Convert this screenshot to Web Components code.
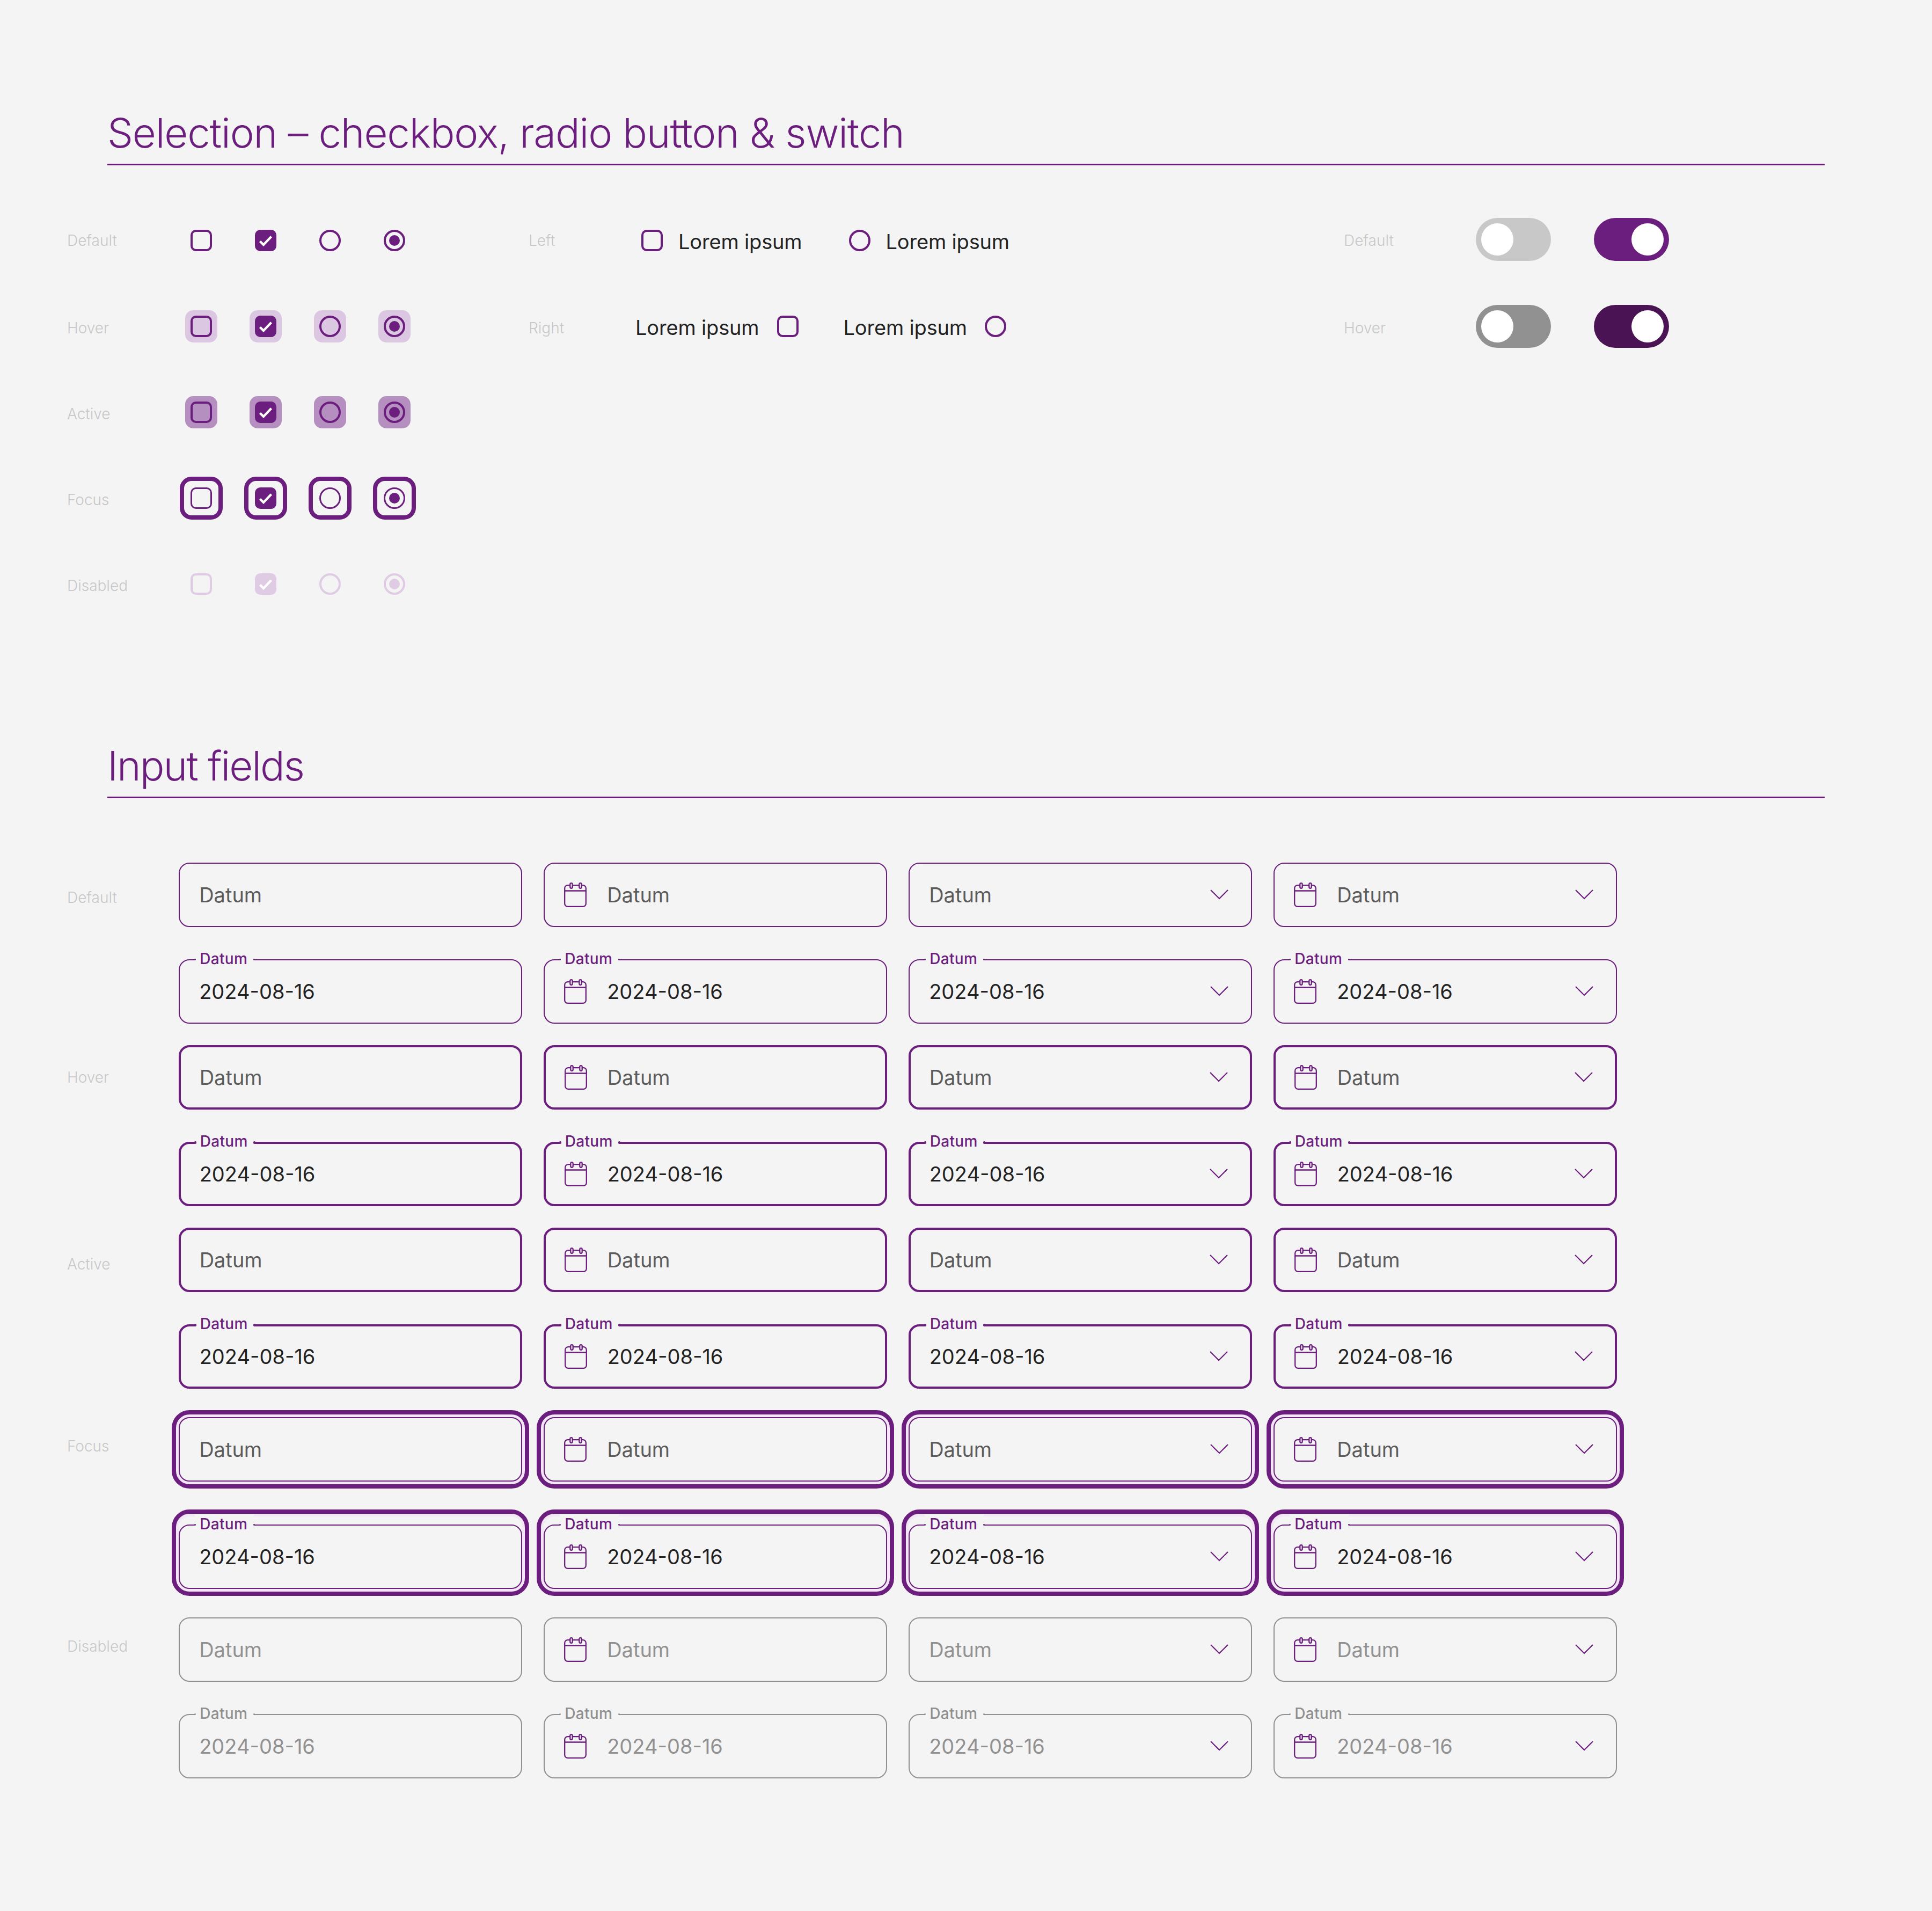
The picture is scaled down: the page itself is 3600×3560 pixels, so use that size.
<!doctype html>
<html><head><meta charset="utf-8"><style>
html,body{margin:0;padding:0;background:#f4f4f4}
body{font-family:Inter,"Liberation Sans",sans-serif;width:3600px;height:3560px;overflow:hidden}
</style></head><body>
<template id="t-section"><style>
:host{display:block;padding-top:var(--top,0)}
.head{margin:0 200px;border-bottom:3px solid #6c1e7e;padding-bottom:12px}
h2{margin:0;font:270 76px/92px Inter,sans-serif;color:#6c1e7e;letter-spacing:var(--ls,-1.1px);white-space:nowrap}
.body{padding-left:125px}
</style><div class="head"><h2></h2></div><div class="body"><slot></slot></div></template>

<template id="t-label"><style>
:host{display:flex;align-items:center;font:300 28px/34px Inter,sans-serif;color:#c8c8c8;white-space:nowrap}
</style><slot></slot></template>

<template id="t-check"><style>
:host{display:flex;align-items:center;justify-content:center;--c:#6c1e7e;--w:4.300px}
:host([state=disabled]){--c:#dfcbe4}
:host([state=focus]){--w:3.500px}
.halo{box-sizing:border-box;display:flex;align-items:center;justify-content:center;flex:none;width:40px;height:40px}
:host([state=hover]) .halo{width:60px;height:60px;border-radius:15px;background:#dcc7e2}
:host([state=active]) .halo{width:60px;height:60px;border-radius:15px;background:#b48fc0}
:host([state=focus]) .halo{width:80px;height:80px;border-radius:22px;border:8px solid #6c1e7e}
.box{box-sizing:border-box;width:40px;height:40px;border:var(--w) solid var(--c);border-radius:10px;display:flex;align-items:center;justify-content:center;flex:none}
:host([kind=radio]) .box{border-radius:50%}
:host([kind=checkbox][checked]) .box{background:var(--c)}
.dot{display:none;width:20px;height:20px;border-radius:50%;background:var(--c);flex:none}
:host([kind=radio][checked]) .dot{display:block}
svg{display:none;width:26px;height:20px;margin-top:1px;flex:none}
:host([kind=checkbox][checked]) svg{display:block}
</style><div class="halo"><div class="box"><div class="dot"></div><svg viewBox="0 0 26 20" fill="none"><path d="M2.5 10.500L9 17L23.500 1.800" stroke="#fff" stroke-width="4.300"/></svg></div></div></template>

<template id="t-option"><style>
:host{display:inline-flex;align-items:center;font:380 38px/46px Inter,sans-serif;color:#222;letter-spacing:-.17px;white-space:nowrap}
:host([side=right]){flex-direction:row-reverse}
span{padding-top:3px}
:host([side=left]) ds-check{margin-right:29px}
:host([side=right]) ds-check{margin-left:33px}
</style><ds-check></ds-check><span><slot></slot></span></template>

<template id="t-switch"><style>
:host{display:block;width:140px;height:80px;border-radius:40px;background:#c8c8c8;position:relative}
:host([hover]){background:#919191}
:host([on]){background:#6c1e7e}
:host([on][hover]){background:#4a1353}
i{position:absolute;top:10px;left:10px;width:60px;height:60px;border-radius:50%;background:#fff}
:host([on]) i{left:70px}
</style><i></i></template>

<template id="t-field"><style>
:host{display:block;position:relative;width:640px;height:120px;flex:none;--c:#6c1e7e;--b:2.800px;--txt:#5c5c5c;--bg:#f4f4f4}
:host([value]){--txt:#222}
:host([state=hover]),:host([state=active]){--b:4.300px}
:host([state=disabled]){--txt:#919191;--line:#919191;--lab:#919191}
.ring{display:none;position:absolute;inset:-13px;border:8px solid #6c1e7e;border-radius:33px;box-shadow:inset 0 0 0 5px #f3e6f6}
:host([state=focus]) .ring{display:block}
:host([state=focus][label]) .ring{top:-28px}
.box{position:relative;box-sizing:border-box;height:120px;border:var(--b) solid var(--line,var(--c));border-radius:20px;background:var(--bg);display:flex;align-items:center;padding-left:calc(39px - var(--b))}
.lab{display:none;position:absolute;top:calc(var(--b) * -1 - 18px);left:calc(31px - var(--b));padding:0 12px 0 9px;background:var(--bg);font:500 28px/36px Inter,sans-serif;color:var(--lab,var(--c));letter-spacing:.35px}
.lab::before,.lab::after{content:"";position:absolute;top:18px;width:var(--b);height:var(--b);border-radius:50%;background:var(--line,var(--c))}
.lab::before{left:calc(var(--b) / -2)}
.lab::after{right:calc(var(--b) / -2)}
:host([label]) .lab{display:block}
.cal{display:none;width:42px;height:46px;margin-right:38px;flex:none}
:host([calendar]) .cal{display:block}
.txt{font:380 38px/46px Inter,sans-serif;color:var(--txt);white-space:nowrap}
.chev{display:none;width:34px;height:19px;margin-left:auto;margin-right:calc(45px - var(--b));flex:none}
:host([chevron]) .chev{display:block}
</style><div class="ring"></div><div class="box"><span class="lab"></span><svg class="cal" viewBox="0 0 42 46" fill="none" stroke="#6c1e7e" stroke-width="2.300"><rect x="1.200" y="5.200" width="39.600" height="39.600" rx="5.500"/><path d="M1.200 15.500H40.800"/><rect x="11.300" y="1.200" width="4.400" height="9.600" rx="2.200" fill="#f4f4f4"/><rect x="28.300" y="1.200" width="4.400" height="9.600" rx="2.200" fill="#f4f4f4"/></svg><span class="txt"><slot></slot></span><svg class="chev" viewBox="0 0 34 19" fill="none"><path d="M1 1L17 17L33 1" stroke="#6c1e7e" stroke-width="2.200"/></svg></div></template>

<template id="t-frow"><style>
:host{display:flex;align-items:center}
ds-label{width:208px;flex:none}
.f{display:flex;gap:40px}
</style><ds-label></ds-label><div class="f"></div></template>

<template id="t-matrix"><style>
:host{display:grid;margin-top:60px;grid-template-columns:860px 1519px auto;align-items:start}
.m{display:grid;grid-template-columns:190px repeat(4,120px);grid-auto-rows:160px}
.o{display:grid;grid-auto-rows:160px}
.s{display:grid;grid-template-columns:246px 140px 220px;grid-auto-rows:160px;align-items:center}
</style><div class="m"><slot name="m"></slot></div><div class="o"><slot name="o"></slot></div><div class="s"><slot name="s"></slot></div></template>

<script>
function tpl(id){return document.getElementById(id).content.cloneNode(true)}
function def(name,id,extra){customElements.define(name,class extends HTMLElement{constructor(){super();this.attachShadow({mode:'open'}).appendChild(tpl(id));}connectedCallback(){extra&&extra(this)}})}
def('ds-check','t-check');
def('ds-label','t-label');
def('ds-switch','t-switch');
def('ds-section','t-section',e=>{e.shadowRoot.querySelector('h2').textContent=e.getAttribute('heading');});
def('ds-option','t-option',e=>{e.shadowRoot.querySelector('ds-check').setAttribute('kind',e.getAttribute('kind'))});
def('ds-matrix','t-matrix');
def('ds-field','t-field',e=>{const l=e.getAttribute('label');if(l)e.shadowRoot.querySelector('.lab').textContent=l});
def('ds-field-row','t-frow',e=>{
  const s=e.shadowRoot,st=e.getAttribute('state'),filled=e.hasAttribute('filled'),lab=s.querySelector('ds-label');
  lab.textContent=e.getAttribute('text')||'';
  lab.style.cssText=e.getAttribute('nudge')||'';
  const wrap=s.querySelector('.f');
  [[0,0],[1,0],[0,1],[1,1]].forEach(([cal,che])=>{
    const f=document.createElement('ds-field');
    f.setAttribute('state',st);
    if(cal)f.setAttribute('calendar','');
    if(che)f.setAttribute('chevron','');
    if(filled){f.setAttribute('label','Datum');f.setAttribute('value','')}
    f.textContent=filled?'2024-08-16':'Datum';
    wrap.appendChild(f);
  });
});
</script>

<ds-section heading="Selection – checkbox, radio button &amp; switch" style="--top:201px;--ls:-1.15px">
<ds-matrix>
  <ds-label slot="m">Default</ds-label>
  <ds-check slot="m" kind="checkbox"></ds-check><ds-check slot="m" kind="checkbox" checked></ds-check><ds-check slot="m" kind="radio"></ds-check><ds-check slot="m" kind="radio" checked></ds-check>
  <ds-label slot="m" style="padding-top:5px">Hover</ds-label>
  <ds-check slot="m" kind="checkbox" state="hover"></ds-check><ds-check slot="m" kind="checkbox" checked state="hover"></ds-check><ds-check slot="m" kind="radio" state="hover"></ds-check><ds-check slot="m" kind="radio" checked state="hover"></ds-check>
  <ds-label slot="m" style="padding-top:5px">Active</ds-label>
  <ds-check slot="m" kind="checkbox" state="active"></ds-check><ds-check slot="m" kind="checkbox" checked state="active"></ds-check><ds-check slot="m" kind="radio" state="active"></ds-check><ds-check slot="m" kind="radio" checked state="active"></ds-check>
  <ds-label slot="m" style="padding-top:5px">Focus</ds-label>
  <ds-check slot="m" kind="checkbox" state="focus"></ds-check><ds-check slot="m" kind="checkbox" checked state="focus"></ds-check><ds-check slot="m" kind="radio" state="focus"></ds-check><ds-check slot="m" kind="radio" checked state="focus"></ds-check>
  <ds-label slot="m" style="padding-top:5px">Disabled</ds-label>
  <ds-check slot="m" kind="checkbox" state="disabled"></ds-check><ds-check slot="m" kind="checkbox" checked state="disabled"></ds-check><ds-check slot="m" kind="radio" state="disabled"></ds-check><ds-check slot="m" kind="radio" checked state="disabled"></ds-check>

  <div slot="o" style="display:flex;align-items:center"><ds-label style="width:210px">Left</ds-label><ds-option kind="checkbox" side="left">Lorem ipsum</ds-option><ds-option kind="radio" side="left" style="margin-left:87px">Lorem ipsum</ds-option></div>
  <div slot="o" style="display:flex;align-items:center"><ds-label style="width:199px;padding-top:5px">Right</ds-label><ds-option kind="checkbox" side="right">Lorem ipsum</ds-option><ds-option kind="radio" side="right" style="margin-left:84px">Lorem ipsum</ds-option></div>

  <ds-label slot="s">Default</ds-label><ds-switch slot="s" style="margin-bottom:4px"></ds-switch><ds-switch slot="s" on style="margin-bottom:4px;margin-left:80px"></ds-switch>
  <ds-label slot="s" style="padding-top:5px">Hover</ds-label><ds-switch slot="s" hover></ds-switch><ds-switch slot="s" on hover style="margin-left:80px"></ds-switch>
</ds-matrix>
</ds-section>

<ds-section heading="Input fields" style="--top:211.500px;--ls:-2px">
  <ds-field-row state="default" text="Default" nudge="padding-top:10px" style="margin-top:120px"></ds-field-row>
  <ds-field-row state="default" filled style="margin-top:60px"></ds-field-row>
  <ds-field-row state="hover" text="Hover" style="margin-top:40px"></ds-field-row>
  <ds-field-row state="hover" filled style="margin-top:60px"></ds-field-row>
  <ds-field-row state="active" text="Active" nudge="padding-top:16px" style="margin-top:40px"></ds-field-row>
  <ds-field-row state="active" filled style="margin-top:60px"></ds-field-row>
  <ds-field-row state="focus" text="Focus" nudge="padding-bottom:12px" style="margin-top:53px"></ds-field-row>
  <ds-field-row state="focus" filled style="margin-top:80px"></ds-field-row>
  <ds-field-row state="disabled" text="Disabled" nudge="padding-bottom:12px" style="margin-top:53px"></ds-field-row>
  <ds-field-row state="disabled" filled style="margin-top:60px"></ds-field-row>
</ds-section>
</body></html>
